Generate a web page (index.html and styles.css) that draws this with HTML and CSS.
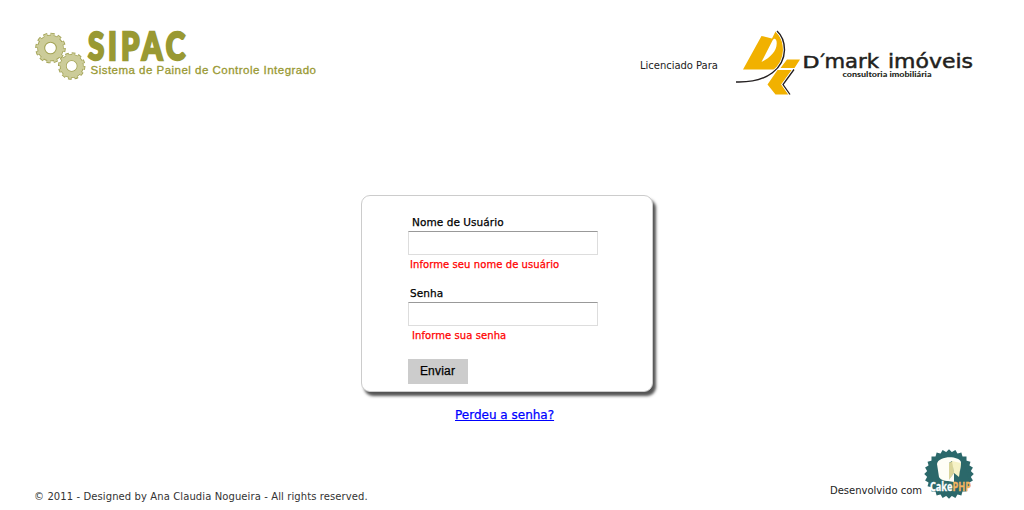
FILE: index.html
```
<!DOCTYPE html>
<html lang="pt-BR">
<head>
<meta charset="utf-8">
<title>SIPAC</title>
<link rel="stylesheet" href="styles.css">
</head>
<body>
<div class="page">
  <header class="header">
    <svg class="sipac" width="290" height="60" viewBox="30 25 290 60" role="img" aria-label="SIPAC">
      <g fill="none">
        <g class="gear-edge">
          <circle cx="50.5" cy="48" r="9.3" stroke-width="8"/>
          <circle cx="50.5" cy="48" r="13.5" stroke-width="3.6" pathLength="120" stroke-dasharray="5.6 4.4"/>
        </g>
        <g class="gear-fill">
          <circle cx="50.5" cy="48" r="9.4" stroke-width="6.2"/>
          <circle cx="50.5" cy="48" r="13" stroke-width="2.8" pathLength="120" stroke-dasharray="4.2 5.8" stroke-dashoffset="-.7"/>
        </g>
        <circle cx="71.7" cy="66" r="13.2" fill="#fff"/>
        <g class="gear-edge">
          <circle cx="71.7" cy="66" r="8.5" stroke-width="7"/>
          <circle cx="71.7" cy="66" r="12" stroke-width="3.4" pathLength="120" stroke-dasharray="5.6 4.4"/>
        </g>
        <g class="gear-fill">
          <circle cx="71.7" cy="66" r="8.5" stroke-width="5.4"/>
          <circle cx="71.7" cy="66" r="11.5" stroke-width="2.6" pathLength="120" stroke-dasharray="4.2 5.8" stroke-dashoffset="-.7"/>
        </g>
      </g>
      <text class="sipac-name" x="88" y="59.5" textLength="101" lengthAdjust="spacingAndGlyphs">SIPAC</text>
      <text class="sipac-tag" x="90.5" y="73.5" textLength="225.5">Sistema de Painel de Controle Integrado</text>
    </svg>
    <div class="client">
      <span class="licensed">Licenciado Para</span>
      <svg width="242" height="70" viewBox="733 28 242 70" role="img" aria-label="D´mark imóveis">
        <path fill="#f1b100" fill-rule="evenodd" d="M743 69.5 761.5 36 772 38.5 775.5 31.5C786 41 786 59 776 69.5ZM761.5 62C771 57 778 50 776.5 41C775.5 38.5 774 38 772.5 40.5Z"/>
        <path d="M777 31C782.5 36 784.5 43 784.5 50C784 67 769 83 736 82" fill="none" stroke="#fff" stroke-width="3"/>
        <path d="M777 31C782.5 36 784.5 43 784.5 50C784 67 769 83 736 82" fill="none" stroke="#231f20" stroke-width="1.4"/>
        <path fill="#f1b100" d="M787 59.5H800L794.5 68H780.5ZM777.5 70H792L781.5 84.5 788.5 94.5H775.5L767.5 84.5Z"/>
        <path d="M794 69.5 783 84.5 790 94.5" fill="none" stroke="#fff" stroke-width="3"/>
        <path d="M794 69.5 783 84.5 790 94.5" fill="none" stroke="#231f20" stroke-width="1.3"/>
        <text class="brand"><tspan class="brand-cap" x="802.5" y="67.5" textLength="17" lengthAdjust="spacingAndGlyphs">D</tspan><tspan class="brand-mark" x="817.5" y="67.5">´</tspan><tspan x="824.5" y="67.5" textLength="54.5" lengthAdjust="spacingAndGlyphs">mark</tspan></text>
        <text class="brand" x="888" y="67.5" textLength="85" lengthAdjust="spacingAndGlyphs">imóveis</text>
        <text class="brand-tag" x="842.5" y="76.5" textLength="89" lengthAdjust="spacingAndGlyphs">consultoria imobiliária</text>
      </svg>
    </div>
  </header>
  <main class="main">
    <form class="card">
      <label class="label label-user" for="user">Nome de Usuário</label>
      <input class="input" id="user" type="text">
      <p class="error error-user">Informe seu nome de usuário</p>
      <label class="label label-pass" for="pass">Senha</label>
      <input class="input" id="pass" type="password">
      <p class="error error-pass">Informe sua senha</p>
      <button class="submit" type="button">Enviar</button>
    </form>
    <a class="lost" href="#">Perdeu a senha?</a>
  </main>
  <footer class="footer">
    <span class="copyright">© 2011 - Designed by Ana Claudia Nogueira - All rights reserved.</span>
    <div class="powered">
      <span class="developed">Desenvolvido com</span>
      <svg width="52" height="52" viewBox="-26 -26 52 52" role="img" aria-label="CakePHP">
        <defs><rect id="sq" x="-17.5" y="-17.5" width="35" height="35"/></defs>
        <g fill="#2b686a">
          <use href="#sq"/><use href="#sq" transform="rotate(15)"/><use href="#sq" transform="rotate(30)"/>
          <use href="#sq" transform="rotate(45)"/><use href="#sq" transform="rotate(60)"/><use href="#sq" transform="rotate(75)"/>
        </g>
        <path fill="#fffef6" d="M-12-10C-11-18 9-19 12-12L11-3 3-13 0-11V7C-6 7-9 5-10 3Z"/>
        <path fill="#d9d49a" d="M0-11 4-13 5-1 0 6Z"/>
        <path fill="#f6f2c6" d="M3-13 12-11 10 3 5-1Z"/>
        <path fill="#fffef6" d="M-1 7 5-1V8Z"/>
        <text class="cake" x="-19" y="17" textLength="41" lengthAdjust="spacingAndGlyphs"><tspan fill="#fff" stroke="#fff">Cake</tspan><tspan fill="#f4b45d" stroke="#f4b45d">PHP</tspan></text>
      </svg>
    </div>
  </footer>
</div>
</body>
</html>
```
FILE: styles.css
```
* { box-sizing: border-box; }
body {
  margin: 0;
  background: #fff;
  color: #222;
  font: 10.5px/16px "DejaVu Sans", Verdana, sans-serif;
}
.page { display: flex; flex-direction: column; height: 510px; overflow: hidden; }
.header { display: flex; justify-content: space-between; height: 195px; padding: 25px 49px 0 30px; }
.client { display: flex; align-items: flex-start; gap: 14px; padding-top: 3px; }
.licensed { width: 79px; margin-top: 30px; white-space: nowrap; font-size: 10px; letter-spacing: -.03px; }
.gear-edge { stroke: #a3a356; }
.gear-fill { stroke: #cccc99; }
.sipac-name { font: 900 38px Lato, sans-serif; letter-spacing: 5px; fill: #999933; stroke: #999933; stroke-width: 2.4px; }
.sipac-tag { font: 11.5px "Liberation Sans", Arial, sans-serif; fill: #999933; stroke: #999933; stroke-width: .3px; }
.brand { font: 19px "DejaVu Sans", sans-serif; fill: #231f20; stroke: #231f20; stroke-width: .5px; }
.brand-cap { font-size: 15.5px; }
.brand-mark { font-size: 17px; }
.brand-tag { font: 900 8px Lato, sans-serif; fill: #231f20; }
.main { display: flex; flex-direction: column; align-items: flex-start; padding-left: 361px; }
.card {
  display: flex;
  flex-direction: column;
  align-items: flex-start;
  width: 292px;
  height: 197px;
  padding: 18px 46px 0;
  border: 1px solid #ccc;
  border-radius: 9px;
  background: #fff;
  box-shadow: 3px 4px 3px #555;
}
.label { height: 17px; color: #000; white-space: nowrap; letter-spacing: .07px; -webkit-text-stroke: .25px #000; }
.label-user { padding-left: 4px; }
.label-pass { margin-top: 12px; padding-left: 2px; }
.input {
  width: 190px;
  height: 24px;
  padding: 2px 4px;
  border: 1px solid #ddd;
  border-top-color: #999;
  border-radius: 0;
  background: #fff;
  outline: 0;
}
.error { height: 16px; margin: 2px 0 0; padding-left: 2px; color: #f00; font-size: 10px; letter-spacing: .08px; white-space: nowrap; -webkit-text-stroke: .25px #f00; }
.error-pass { padding-left: 4px; }
.submit {
  width: 60px;
  height: 25px;
  margin-top: 15px;
  padding: 0 1px 2px 0;
  border: 0;
  background: #ccc;
  color: #000;
  font: 12px "Liberation Sans", Arial, sans-serif;
  letter-spacing: .2px;
  -webkit-text-stroke: .25px #000;
}
.lost { margin: 15px 0 0 94px; color: #00f; font-size: 12px; -webkit-text-stroke: .25px #00f; }
.footer { display: flex; justify-content: space-between; align-items: flex-start; margin-top: 25px; padding: 0 49px 0 34px; }
.copyright { margin-top: 41px; color: #333; font-size: 10px; letter-spacing: .1px; white-space: nowrap; }
.powered { display: flex; align-items: flex-start; }
.developed { width: 93px; margin-top: 35px; font-size: 10px; white-space: nowrap; }
.cake { font: bold 11.5px "Open Sans", sans-serif; stroke-width: .3px; }
```
